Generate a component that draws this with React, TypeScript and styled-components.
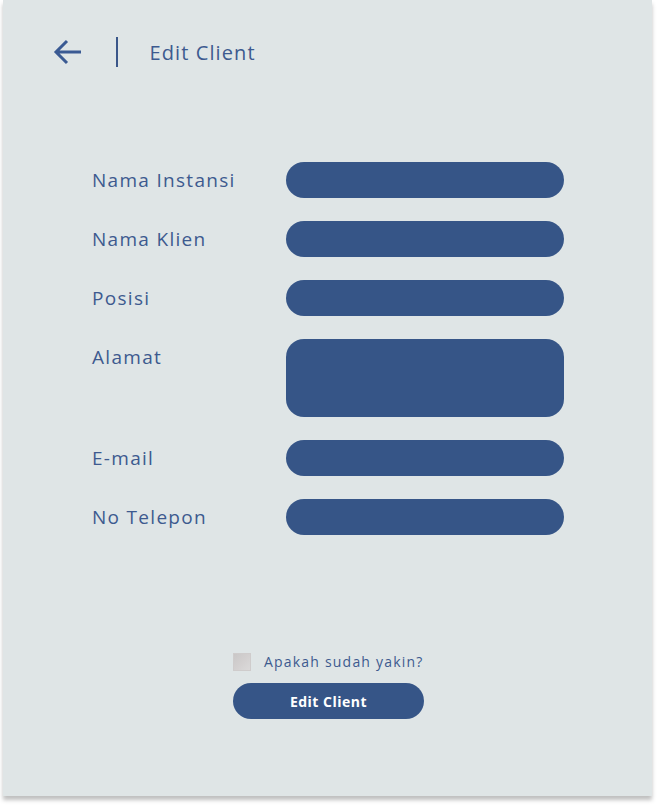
import React from "react";
import styled, { createGlobalStyle } from "styled-components";

const Global = createGlobalStyle`
  html, body { margin: 0; padding: 0; background: #ffffff; }
  body { font-family: "Open Sans", "Liberation Sans", sans-serif; }
  * { box-sizing: border-box; }
`;

const Page = styled.div`
  width: 657px;
  height: 806px;
  padding: 0 5px 10px 3px;
`;

const Card = styled.div`
  width: 649px;
  height: 796px;
  background: #dfe5e6;
  box-shadow: 0 4px 4px rgba(0, 0, 0, 0.25);
  display: flex;
  flex-direction: column;
`;

const Header = styled.div`
  display: flex;
  align-items: center;
  height: 104px;
  padding: 0 0 0 49px;
`;

const BackButton = styled.button`
  border: none;
  background: none;
  padding: 0;
  width: 32px;
  height: 32px;
  display: flex;
  align-items: center;
  justify-content: center;
  cursor: pointer;
`;

const Divider = styled.div`
  width: 1.5px;
  height: 30px;
  background: #3a5689;
  margin: 0 32px 0 32px;
`;

const Title = styled.h1`
  margin: 0;
  font-weight: 400;
  font-size: 20px;
  color: #3d5a8f;
  letter-spacing: 1.1px;
`;

const Form = styled.div`
  display: flex;
  flex-direction: column;
  gap: 23px;
  padding: 58px 0 0 89px;
`;

const Row = styled.div<{ $tall?: boolean }>`
  display: grid;
  grid-template-columns: 194px 278px;
  align-items: ${(p) => (p.$tall ? "start" : "center")};
`;

const Label = styled.label`
  font-size: 19px;
  color: #3d5a8f;
  letter-spacing: 1.3px;
  line-height: 36px;
`;

const Field = styled.div<{ $tall?: boolean }>`
  width: 278px;
  height: ${(p) => (p.$tall ? "78px" : "36px")};
  border-radius: 18px;
  background: #365587;
`;

const Footer = styled.div`
  margin-top: auto;
  display: flex;
  flex-direction: column;
  align-items: center;
  padding: 0 0 77px 2px;
  gap: 12px;
`;

const Confirm = styled.div`
  display: flex;
  align-items: center;
  gap: 13px;
  width: 191px;
`;

const Check = styled.span`
  width: 18px;
  height: 18px;
  background: linear-gradient(135deg, #c9c6c6 0%, #dcdada 100%);
  box-shadow: inset 0 0 0 1px #cfcccc;
  flex: none;
`;

const ConfirmText = styled.span`
  font-size: 14px;
  color: #3d5a8f;
  white-space: nowrap;
  letter-spacing: 1.2px;
`;

const SubmitButton = styled.button`
  width: 191px;
  height: 36px;
  border-radius: 18px;
  border: none;
  background: #365587;
  color: #ffffff;
  font-family: "Open Sans", "Liberation Sans", sans-serif;
  font-weight: 700;
  font-size: 14px;
  letter-spacing: 0.5px;
  cursor: pointer;
`;

const fields = [
  { label: "Nama Instansi" },
  { label: "Nama Klien" },
  { label: "Posisi" },
  { label: "Alamat", tall: true },
  { label: "E-mail" },
  { label: "No Telepon" },
];

export default function App() {
  return (
    <Page>
      <Global />
      <Card>
        <Header>
          <BackButton aria-label="Kembali">
            <svg width="32" height="32" viewBox="0 0 32 32" fill="none">
              <path
                d="M29 16H5M15 5L4 16l11 11"
                stroke="#3a5a93"
                strokeWidth="3"
                strokeLinecap="butt"
                strokeLinejoin="miter"
              />
            </svg>
          </BackButton>
          <Divider />
          <Title>Edit Client</Title>
        </Header>
        <Form>
          {fields.map((f) => (
            <Row key={f.label} $tall={f.tall}>
              <Label>{f.label}</Label>
              <Field $tall={f.tall} />
            </Row>
          ))}
        </Form>
        <Footer>
          <Confirm>
            <Check />
            <ConfirmText>Apakah sudah yakin?</ConfirmText>
          </Confirm>
          <SubmitButton>Edit Client</SubmitButton>
        </Footer>
      </Card>
    </Page>
  );
}
